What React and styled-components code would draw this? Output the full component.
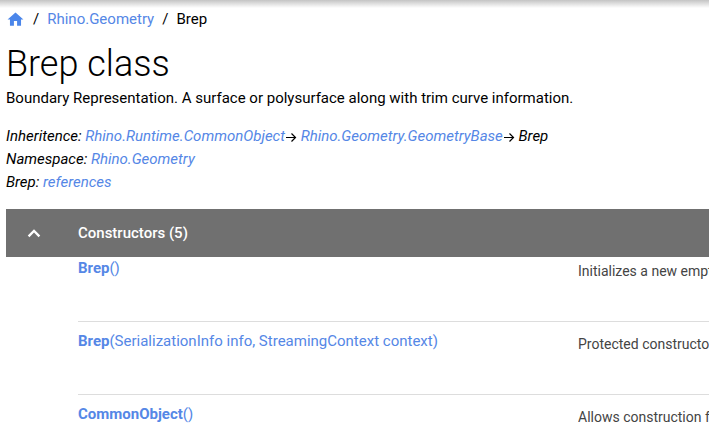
import styled, { createGlobalStyle } from "styled-components";

const GlobalStyle = createGlobalStyle`
body {
margin: 0;
background: #fff;
color: #000;
font-family: Roboto, sans-serif;
font-size: 15px;
line-height: 23px;
overflow: hidden;
}
`;

const Page = styled.div`
display: flex;
flex-direction: column;
`;

const TopShadow = styled.div`
height: 8px;
background: linear-gradient(#c4c4c4, #fff);
`;

const Main = styled.main`
display: flex;
flex-direction: column;
padding-left: 6px;
`;

const Link = styled.a`
color: #5587e6;
text-decoration: none;
`;

const Breadcrumb = styled.nav`
display: flex;
align-items: center;
gap: 8px;
`;

const HomeLink = styled(Link)`
display: flex;
width: 19px;
color: #4b86ea;
`;

const Title = styled.h1`
margin: 11px 0 0;
font-size: 36px;
line-height: 45px;
font-weight: 300;
`;

const Summary = styled.p`
margin: 0;
white-space: nowrap;
`;

const Details = styled.div`
margin: 15px 0;
font-style: italic;
white-space: nowrap;
`;

const ArrowIcon = styled.svg`
width: 12px;
height: 14px;
vertical-align: -3px;
`;

const SectionHeader = styled.button`
display: flex;
align-items: center;
width: 100%;
height: 48px;
padding: 0 18px;
gap: 34px;
border: 0;
background: #707070;
color: #fff;
font: 500 15px Roboto, sans-serif;
cursor: pointer;
`;

const Members = styled.table`
width: calc(100% - 72px);
margin-left: 72px;
table-layout: fixed;
border-collapse: collapse;
`;

const Row = styled.tr`
height: 73px;
border-top: 1px solid #ddd;

&:first-child {
height: 64px;
border-top: 0;
}
`;

const Cell = styled.td`
padding: ${props => props.$first ? '0' : '8px'} 0 0;
vertical-align: top;
white-space: nowrap;
overflow: hidden;
`;

const NameCell = styled(Cell)`
width: 500px;
`;

const TextCell = styled(Cell)`
padding-top: ${props => props.$first ? '3px' : '11px'};
color: #444;
font-size: 14px;
`;

const members = [
	{ name: "Brep", args: "()", text: "Initializes a new empty brep" },
	{ name: "Brep", args: "(SerializationInfo info, StreamingContext context)", text: "Protected constructor for internal use." },
	{ name: "CommonObject", args: "()", text: "Allows construction from inheriting classes." },
];

const Arrow = () => {
	return <ArrowIcon viewBox="0 0 12 14" fill="none" stroke="#000" strokeWidth="1.2" aria-hidden="true">
		<path d="M1 7.5h9.5M6.5 3.5l4 4-4 4" />
	</ArrowIcon>
}

const App = () => {
	return <Page>
		<GlobalStyle />
		<TopShadow />
		<Main>
			<Breadcrumb aria-label="Breadcrumb">
				<HomeLink href="#" aria-label="Home">
					<svg width="19" height="19" viewBox="0 0 24 24" fill="currentColor">
						<path d="M10 20v-6h4v6h5v-8h3L12 3 2 12h3v8z" />
					</svg>
				</HomeLink>
				<span>/</span>
				<Link href="#">Rhino.Geometry</Link>
				<span>/</span>
				<span>Brep</span>
			</Breadcrumb>
			<Title>Brep class</Title>
			<Summary>Boundary Representation. A surface or polysurface along with trim curve information.</Summary>
			<Details>
				<div>
					Inheritence: <Link href="#">Rhino.Runtime.CommonObject</Link><Arrow /> <Link href="#">Rhino.Geometry.GeometryBase</Link><Arrow /> Brep
				</div>
				<div>Namespace: <Link href="#">Rhino.Geometry</Link></div>
				<div>Brep: <Link href="#">references</Link></div>
			</Details>
			<SectionHeader type="button" aria-expanded="true">
				<svg width="20" height="20" viewBox="0 0 24 24" fill="currentColor" aria-hidden="true">
					<path d="M12 7.5l-7.5 7.5 2 2L12 11.5l5.5 5.5 2-2z" />
				</svg>
				Constructors (5)
			</SectionHeader>
			<Members>
				<tbody>
					{members.map((member, i) => (
						<Row key={i}>
							<NameCell $first={i === 0}>
								<Link href="#"><b>{member.name}</b>{member.args}</Link>
							</NameCell>
							<TextCell $first={i === 0}>{member.text}</TextCell>
						</Row>
					))}
				</tbody>
			</Members>
		</Main>
	</Page>
}

export default App;
